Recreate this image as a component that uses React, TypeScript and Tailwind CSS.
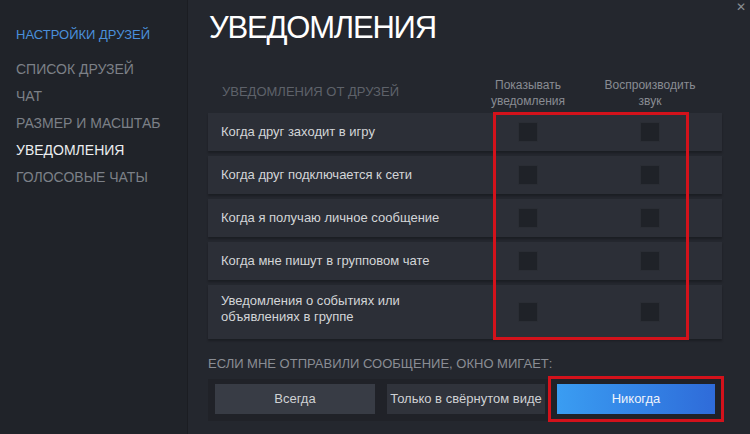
import React from 'react'

const menu = [
  { label: 'СПИСОК ДРУЗЕЙ', active: false },
  { label: 'ЧАТ', active: false },
  { label: 'РАЗМЕР И МАСШТАБ', active: false },
  { label: 'УВЕДОМЛЕНИЯ', active: true },
  { label: 'ГОЛОСОВЫЕ ЧАТЫ', active: false },
]

const rows = [
  ['Когда друг заходит в игру'],
  ['Когда друг подключается к сети'],
  ['Когда я получаю личное сообщение'],
  ['Когда мне пишут в групповом чате'],
  ['Уведомления о событиях или', 'объявлениях в группе'],
]

function Box() {
  return <div className="w-[20px] h-[20px] bg-[#1f2228] border border-[#2a2d34]" />
}

export default function App() {
  return (
    <div
      className="w-[750px] h-[434px] flex overflow-hidden bg-[#24272e] text-[#c6c8cc]"
      style={{ fontFamily: '"Liberation Sans", Arial, sans-serif' }}
    >
      {/* sidebar */}
      <div className="w-[188px] shrink-0 bg-[#202329] border-r border-[#1b1d22] pt-[27px] pl-[16px]">
        <div className="text-[13px] leading-[16px] text-[#4a8fdb] mb-[13px]">НАСТРОЙКИ ДРУЗЕЙ</div>
        <div className="flex flex-col">
          {menu.map(m => (
            <div
              key={m.label}
              className={
                'text-[14px] leading-[27px] ' + (m.active ? 'text-[#eceef0]' : 'text-[#7c8087]')
              }
            >
              {m.label}
            </div>
          ))}
        </div>
      </div>

      {/* main */}
      <div className="relative flex-1 pl-[20px] pr-[28px]">
        <div className="absolute top-[1px] right-[4px] text-[12px] leading-[12px] text-[#8a8d93]">✕</div>

        <div className="pt-[8px] pl-[1px] text-[31px] leading-[40px] text-white tracking-[-1.2px]">УВЕДОМЛЕНИЯ</div>

        {/* header */}
        <div className="flex items-center mt-[28px] h-[34px] pr-[6px]">
          <div className="flex-1 pl-[14px] text-[13px] text-[#5e626a] -mt-[2px]">УВЕДОМЛЕНИЯ ОТ ДРУЗЕЙ</div>
          <div className="w-[112px] text-center text-[12px] leading-[16px] text-[#898c93]">
            Показывать<br />уведомления
          </div>
          <div className="w-[132px] text-center text-[12px] leading-[16px] text-[#898c93]">
            Воспроизводить<br />звук
          </div>
        </div>

        {/* rows */}
        <div className="relative mt-[3px] flex flex-col gap-[5px]">
          {rows.map((r, i) => (
            <div
              key={i}
              className={
                'flex items-center pr-[6px] bg-[#2c2f37] shadow-[0_2px_2px_rgba(0,0,0,0.25)] ' +
                (r.length > 1 ? 'h-[54px]' : 'h-[38px]')
              }
            >
              <div
                className={
                  'flex-1 pl-[13px] text-[13px] leading-[16px] text-[#d3d5d8] ' + (r.length > 1 ? '-mt-[6px]' : '')
                }
              >
                {r.map(l => (
                  <div key={l}>{l}</div>
                ))}
              </div>
              <div className="w-[112px] flex justify-center">
                <Box />
              </div>
              <div className="w-[132px] flex justify-center">
                <Box />
              </div>
            </div>
          ))}
          <div className="absolute top-[-1px] left-[285px] w-[196px] h-[228px] border-[3px] border-[#d3121b]" />
        </div>

        {/* flash */}
        <div className="mt-[17px] text-[13px] leading-[16px] text-[#8a8d94]">
          ЕСЛИ МНЕ ОТПРАВИЛИ СООБЩЕНИЕ, ОКНО МИГАЕТ:
        </div>
        <div className="relative mt-[7px] flex gap-[12px] bg-[#202228] px-[7px] py-[5px] h-[42px]">
          <div className="w-[160px] h-[30px] flex items-center justify-center bg-[#383c45] text-[13px] text-[#cfd1d4]">
            Всегда
          </div>
          <div className="w-[158px] h-[30px] flex items-center justify-center bg-[#30333b] text-[13px] text-[#cfd1d4] whitespace-nowrap">
            Только в свёрнутом виде
          </div>
          <div className="w-[158px] h-[30px] flex items-center justify-center bg-gradient-to-r from-[#3a9df2] to-[#2f6bd9] text-[13px] text-[#eef3fb]">
            Никогда
          </div>
          <div className="absolute top-[-3px] left-[340px] w-[176px] h-[46px] border-[3px] border-[#d3121b]" />
        </div>
      </div>
    </div>
  )
}
